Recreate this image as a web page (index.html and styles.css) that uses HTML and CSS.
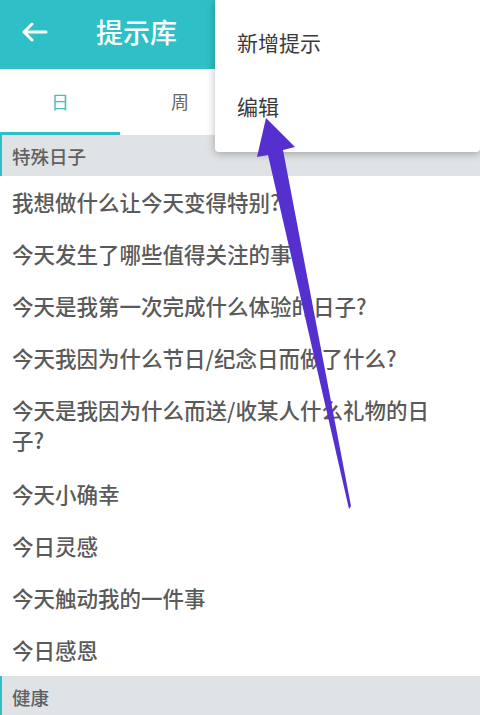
FILE: index.html
```html
<!DOCTYPE html>
<html lang="zh-CN">
<head>
    <meta charset="UTF-8">
    <meta name="viewport" content="width=device-width, initial-scale=1.0">
    <title>提示库</title>
    <link rel="stylesheet" href="styles.css">
</head>
<body>
    <div class="screen">
        <header class="topbar">
            <button class="back" aria-label="返回">
                <svg width="26" height="20" viewBox="0 0 26 20">
                    <path d="M2 10H24M10 2L2 10L10 18" fill="none" stroke="#fff" stroke-width="3" stroke-linecap="round" stroke-linejoin="round"/>
                </svg>
            </button>
            <h1>提示库</h1>
        </header>

        <nav class="tabs">
            <div class="tab active">日</div>
            <div class="tab">周</div>
            <div class="tab">月</div>
            <div class="tab">年</div>
        </nav>

        <section class="group">
            <div class="group-title">特殊日子</div>
            <ul class="prompts">
                <li>我想做什么让今天变得特别?</li>
                <li>今天发生了哪些值得关注的事?</li>
                <li>今天是我第一次完成什么体验的日子?</li>
                <li>今天我因为什么节日/纪念日而做了什么?</li>
                <li class="long">今天是我因为什么而送/收某人什么礼物的日子?</li>
                <li>今天小确幸</li>
                <li>今日灵感</li>
                <li>今天触动我的一件事</li>
                <li>今日感恩</li>
            </ul>
        </section>

        <section class="group">
            <div class="group-title">健康</div>
        </section>

        <div class="menu">
            <div class="menu-item">新增提示</div>
            <div class="menu-item">编辑</div>
        </div>

        <!-- annotation arrow pointing at 编辑 -->
        <svg class="pointer" width="480" height="715" viewBox="0 0 480 715">
            <polygon points="266,118 295,147 283,150 351,506 349,509 268,155 257,157" fill="#5630cf"/>
        </svg>
    </div>
</body>
</html>
```

FILE: styles.css
```css
* {
    margin: 0;
    padding: 0;
    box-sizing: border-box;
}
body {
    background: #fff;
    font-family: "Noto Sans CJK SC", "Noto Sans", sans-serif;
    color: #595959;
    overflow: hidden;
}
.screen {
    position: relative;
    width: 480px;
    height: 715px;
    overflow: hidden;
}
.topbar {
    height: 69px;
    background-color: #2ec0c6;
    display: flex;
    align-items: center;
    padding: 0 0 6px 22px;
}
.back {
    background: none;
    border: none;
    width: 26px;
    height: 20px;
    display: flex;
}
.topbar h1 {
    margin-left: 48px;
    font-size: 27px;
    font-weight: 500;
    color: #fff;
    line-height: 1;
}
.tabs {
    display: flex;
    height: 66px;
}
.tab {
    flex: 1;
    display: flex;
    align-items: center;
    justify-content: center;
    font-size: 18px;
    color: #666;
    border-bottom: 3px solid transparent;
}
.tab.active {
    color: #3cc2c8;
    border-bottom-color: #2ec0c6;
}
.group-title {
    height: 41px;
    background-color: #e0e3e6;
    border-left: 2px solid #2ec0c6;
    padding-left: 10px;
    display: flex;
    align-items: center;
    font-size: 18.5px;
    font-weight: 500;
    color: #606060;
}
.prompts {
    list-style: none;
}
.prompts li {
    padding: 11px 40px 11px 12px;
    font-size: 21.5px;
    font-weight: 500;
    line-height: 30px;
    color: #5a5a5a;
}
.prompts li.long {
    padding-bottom: 13px;
}
.menu {
    position: absolute;
    top: 0;
    left: 215px;
    width: 265px;
    height: 152px;
    background: #fff;
    border-radius: 0 0 4px 4px;
    box-shadow: 0 2px 8px rgba(0, 0, 0, 0.28);
    padding-top: 10px;
}
.menu-item {
    height: 64px;
    display: flex;
    align-items: center;
    padding-left: 22px;
    font-size: 21px;
    color: #3a3a3a;
}
.pointer {
    position: absolute;
    top: 0;
    left: 0;
}
```
